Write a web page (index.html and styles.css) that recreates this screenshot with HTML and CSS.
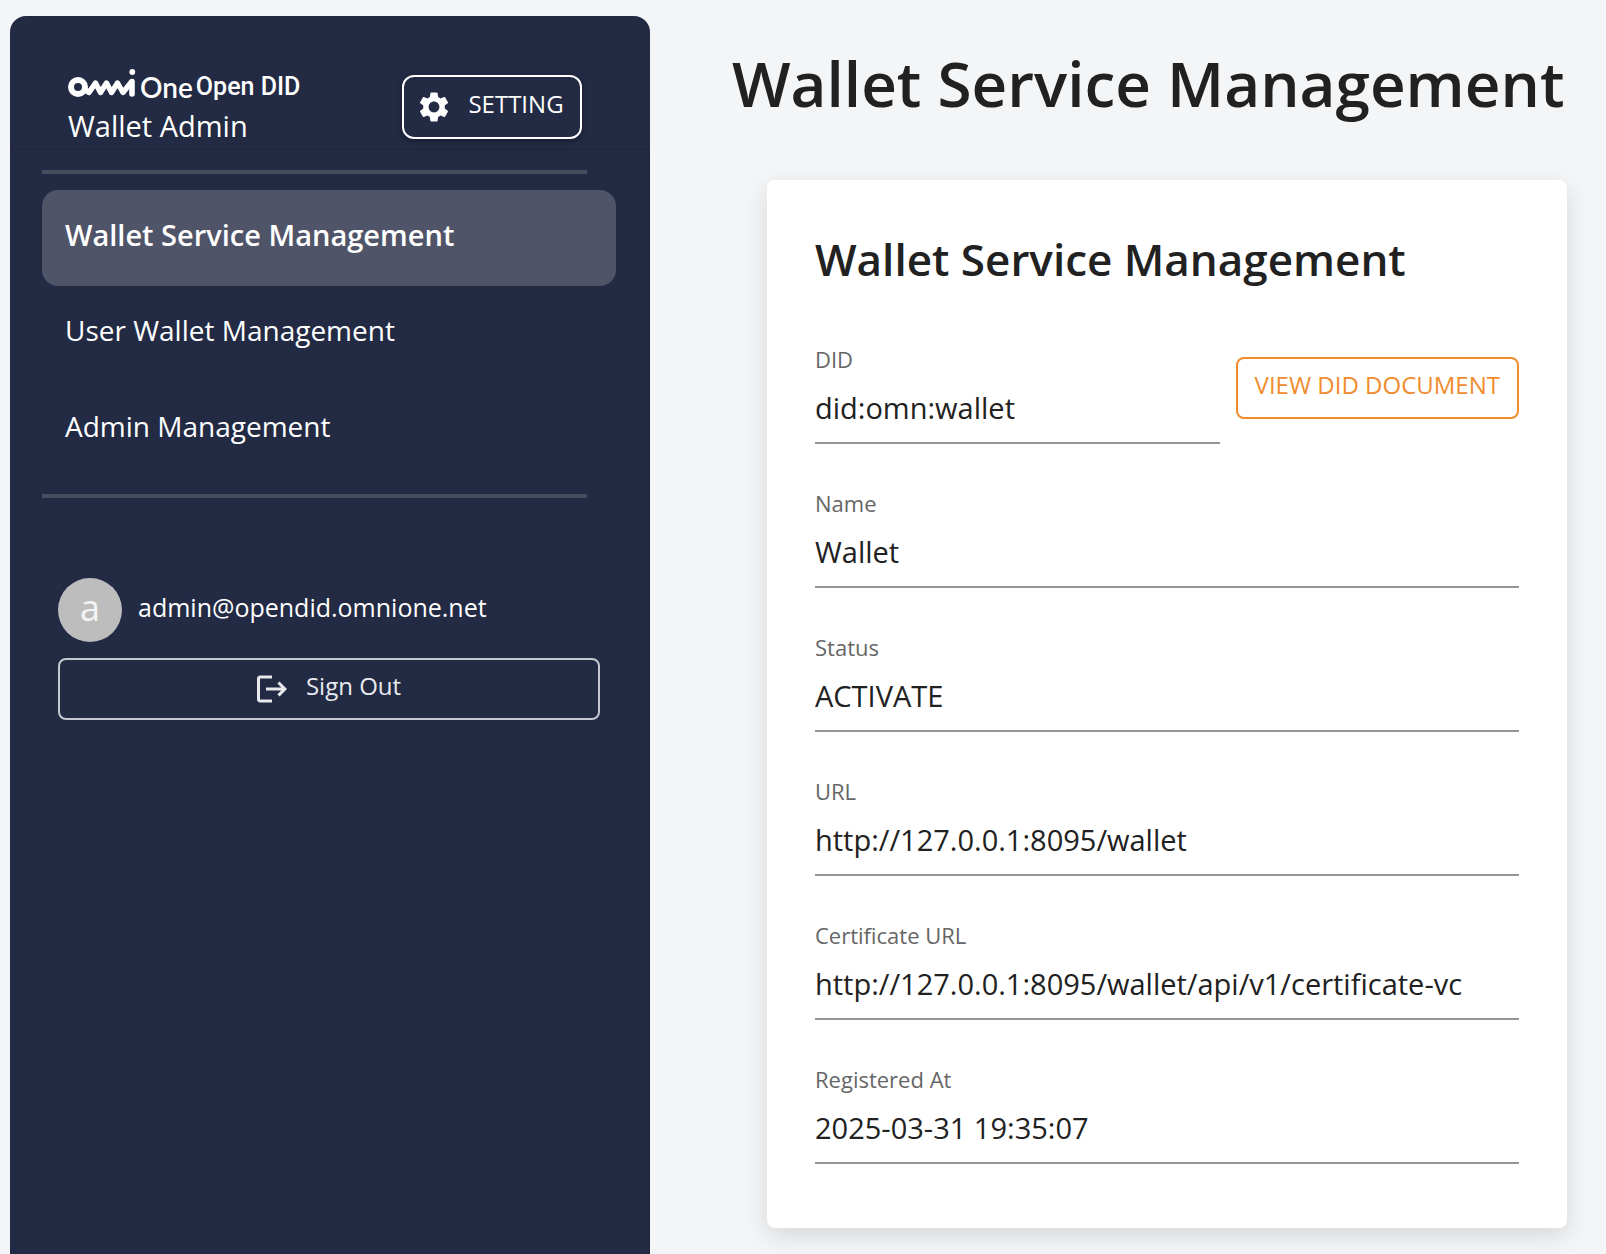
FILE: index.html
```html
<!DOCTYPE html>
<html lang="en">
<head>
<meta charset="utf-8">
<meta name="viewport" content="width=device-width, initial-scale=1">
<title>Wallet Service Management</title>
<link rel="stylesheet" href="styles.css">
</head>
<body>
<div class="layout">
  <aside class="sidebar">
    <header class="sidebar-header">
      <div class="brand">
        <div class="logo">
          <svg class="logo-mark" viewBox="0 0 68 30" width="68" height="30" aria-hidden="true">
            <circle cx="10" cy="19" r="7" fill="none" stroke="#fff" stroke-width="6"/>
            <path d="M17.500 22 L21 24.500 L27.500 15 L32.500 24.500 L38.500 15 L43.500 24.500 L49.500 15 L55 24.500 L63 14.500" fill="none" stroke="#fff" stroke-width="5.400" stroke-linejoin="round" stroke-linecap="round"/>
            <path d="M64 13.500V26" stroke="#fff" stroke-width="5.600" stroke-linecap="round"/>
            <circle cx="64.300" cy="4" r="2.900" fill="#fff"/>
          </svg>
          <span class="logo-one">One</span>
          <span class="logo-did">Open DID</span>
        </div>
        <div class="brand-name">Wallet Admin</div>
      </div>
      <button class="button button-setting" type="button">
        <svg class="icon" viewBox="0 0 24 24" aria-hidden="true"><path fill="currentColor" d="M19.14 12.94c.04-.3.06-.61.06-.94 0-.32-.02-.64-.07-.94l2.03-1.58c.18-.14.23-.41.12-.61l-1.92-3.32c-.12-.22-.37-.29-.59-.22l-2.39.96c-.5-.38-1.03-.7-1.62-.94l-.36-2.54c-.04-.24-.24-.41-.48-.41h-3.84c-.24 0-.43.17-.47.41l-.36 2.54c-.59.24-1.13.57-1.62.94l-2.39-.96c-.22-.08-.47 0-.59.22L2.74 8.87c-.12.21-.08.47.12.61l2.03 1.58c-.05.3-.09.63-.09.94s.02.64.07.94l-2.03 1.58c-.18.14-.23.41-.12.61l1.92 3.32c.12.22.37.29.59.22l2.39-.96c.5.38 1.03.7 1.62.94l.36 2.54c.05.24.24.41.48.41h3.84c.24 0 .44-.17.47-.41l.36-2.54c.59-.24 1.13-.56 1.62-.94l2.39.96c.22.08.47 0 .59-.22l1.92-3.32c.12-.22.07-.47-.12-.61zM12 15.6c-1.98 0-3.6-1.62-3.6-3.6s1.62-3.6 3.6-3.6 3.6 1.62 3.6 3.6-1.62 3.6-3.6 3.6"/></svg>
        <span class="button-label">SETTING</span>
      </button>
    </header>
    <div class="sidebar-body">
      <hr class="divider">
      <nav class="menu">
        <a class="menu-item menu-item-active" href="#service" aria-current="page">Wallet Service Management</a>
        <a class="menu-item" href="#users">User Wallet Management</a>
        <a class="menu-item" href="#admins">Admin Management</a>
      </nav>
      <hr class="divider">
      <div class="account">
        <div class="account-user">
          <span class="avatar">a</span>
          <span class="account-email">admin@opendid.omnione.net</span>
        </div>
        <button class="button button-signout" type="button">
          <svg class="icon" viewBox="0 0 24 24" aria-hidden="true"><path fill="currentColor" d="m17 7-1.41 1.41L18.17 11H8v2h10.17l-2.58 2.58L17 17l5-5zM4 5h8V3H4c-1.1 0-2 .9-2 2v14c0 1.1.9 2 2 2h8v-2H4z"/></svg>
          <span class="button-label">Sign Out</span>
        </button>
      </div>
    </div>
  </aside>
  <main class="content">
    <h1 class="page-title">Wallet Service Management</h1>
    <section class="card">
      <h2 class="card-title">Wallet Service Management</h2>
      <form class="fields">
        <div class="field-row">
          <div class="field">
            <label class="field-label" for="did">DID</label>
            <input class="field-input" id="did" type="text" value="did:omn:wallet" readonly>
          </div>
          <button class="button button-document" type="button"><span class="button-label">VIEW DID DOCUMENT</span></button>
        </div>
        <div class="field">
          <label class="field-label" for="name">Name</label>
          <input class="field-input" id="name" type="text" value="Wallet" readonly>
        </div>
        <div class="field">
          <label class="field-label" for="status">Status</label>
          <input class="field-input" id="status" type="text" value="ACTIVATE" readonly>
        </div>
        <div class="field">
          <label class="field-label" for="url">URL</label>
          <input class="field-input" id="url" type="text" value="http://127.0.0.1:8095/wallet" readonly>
        </div>
        <div class="field">
          <label class="field-label" for="certificate">Certificate URL</label>
          <input class="field-input" id="certificate" type="text" value="http://127.0.0.1:8095/wallet/api/v1/certificate-vc" readonly>
        </div>
        <div class="field">
          <label class="field-label" for="registered">Registered At</label>
          <input class="field-input" id="registered" type="text" value="2025-03-31 19:35:07" readonly>
        </div>
      </form>
    </section>
  </main>
</div>
</body>
</html>
```
FILE: styles.css
```css
*,
*::before,
*::after {
  box-sizing: border-box;
}

body {
  margin: 0;
  background: #f4f5f7;
  color: #212121;
  font-family: "Open Sans", "Noto Sans", sans-serif;
  font-size: 29px;
}

.layout {
  display: flex;
  min-height: 100vh;
}

/* Sidebar */
.sidebar {
  display: flex;
  flex-direction: column;
  flex: 0 0 640px;
  margin: 16px 0 0 10px;
  border-radius: 16px 16px 0 0;
  background: #232a44;
  color: #fff;
}

.sidebar-header {
  display: flex;
  justify-content: space-between;
  align-items: flex-start;
  padding: 52px 68px 0 58px;
}

.logo {
  display: flex;
  height: 36px;
  line-height: 38px;
  white-space: nowrap;
}

.logo-mark {
  flex: none;
}

.logo-one {
  margin-left: 4px;
  font-family: Lato, sans-serif;
  font-size: 28px;
  font-weight: 600;
}

.logo-did {
  margin-left: 3px;
  font-family: Roboto, sans-serif;
  font-size: 25px;
  font-weight: 500;
}

.brand-name {
  line-height: 44px;
}

.sidebar-body {
  flex: 1;
  padding: 20px 32px 32px;
  border-top: 2px solid #20273e;
  border-right: 2px solid #20273e;
}

.divider {
  height: 4px;
  margin: 0 29px 0 0;
  border: 0;
  background: #484c5f;
}

.menu {
  display: flex;
  flex-direction: column;
  margin: 16px 0;
}

.menu-item {
  display: flex;
  align-items: center;
  height: 96px;
  padding: 0 23px 8px;
  border-radius: 16px;
  color: #fff;
  font-size: 28px;
  text-decoration: none;
}

.menu-item-active {
  background: #505468;
  font-size: 29px;
  font-weight: 600;
}

.account {
  display: flex;
  flex-direction: column;
  gap: 16px;
  padding: 80px 16px 0;
}

.account-user {
  display: flex;
  align-items: center;
  gap: 16px;
}

.avatar {
  display: flex;
  justify-content: center;
  align-items: center;
  width: 64px;
  height: 64px;
  padding-bottom: 6px;
  border-radius: 50%;
  background: #bdbdbd;
  color: #f4f5f7;
  font-size: 36px;
}

.account-email {
  padding-bottom: 6px;
  font-size: 25px;
}

/* Buttons */
.button {
  display: flex;
  justify-content: center;
  align-items: center;
  gap: 16px;
  height: 62px;
  padding: 0 17px;
  border: 2px solid;
  border-radius: 8px;
  background: transparent;
  font-family: inherit;
  font-size: 24px;
  white-space: nowrap;
  cursor: pointer;
}

.button-label {
  padding-bottom: 8px;
}

.icon {
  flex: none;
  width: 36px;
  height: 36px;
}

.button-setting {
  width: 180px;
  height: 64px;
  margin-top: 7px;
  padding: 0 16px 0 12px;
  border-radius: 12px;
  border-color: #fff;
  background: #232a44;
  color: #fff;
  box-shadow: 0 2px 6px rgba(0, 0, 0, 0.4);
}

.button-signout {
  padding-right: 20px;
  border-color: #c5c8d0;
  color: #e8eaee;
}

.button-document {
  margin-top: 9px;
  border-color: #f08c2e;
  color: #f08c2e;
}

/* Content */
.content {
  flex: 1;
  min-width: 0;
  padding: 41px 39px 26px 82px;
}

.page-title {
  margin: 0 0 55px;
  font-size: 62px;
  font-weight: 600;
  line-height: 84px;
  white-space: nowrap;
}

.card {
  margin-left: 35px;
  padding: 48px 48px 64px;
  border-radius: 8px;
  background: #fff;
  box-shadow: 0 8px 24px rgba(0, 0, 0, 0.12);
}

.card-title {
  margin: 0 0 58px;
  font-size: 44px;
  font-weight: 600;
  line-height: 62px;
}

.fields {
  display: flex;
  flex-direction: column;
  gap: 48px;
}

.field-row {
  display: flex;
  align-items: flex-start;
  gap: 16px;
}

.field {
  display: flex;
  flex: 1;
  flex-direction: column;
  min-width: 0;
}

.field-label {
  color: #666;
  font-size: 22px;
  line-height: 22px;
}

.field-input {
  width: 100%;
  height: 74px;
  padding: 2px 0 0;
  border: 0;
  border-bottom: 2px solid #949494;
  border-radius: 0;
  outline: 0;
  background: transparent;
  color: #212121;
  font-family: inherit;
  font-size: 29px;
}
```
